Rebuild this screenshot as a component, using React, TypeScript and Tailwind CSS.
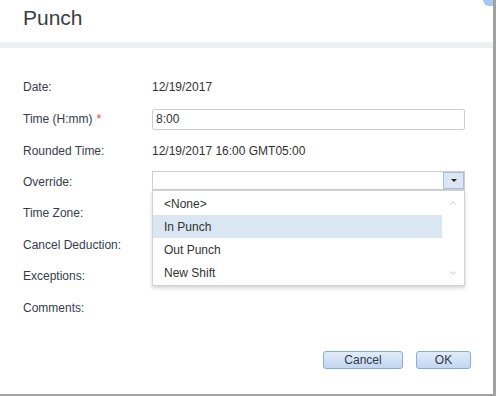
import { ChevronDown, ChevronUp } from 'lucide-react';

// 폼 행: 라벨 + 값 (행 높이로 세로 위치를 맞춘다)
const ROWS: { label: string; h: string; kind?: 'date' | 'time' | 'rounded' | 'override' }[] = [
  { label: 'Date:', h: 'h-[32px]', kind: 'date' },
  { label: 'Time (H:mm)', h: 'h-[32px]', kind: 'time' },
  { label: 'Rounded Time:', h: 'h-[32px]', kind: 'rounded' },
  { label: 'Override:', h: 'h-[30px]', kind: 'override' },
  { label: 'Time Zone:', h: 'h-[32px]' },
  { label: 'Cancel Deduction:', h: 'h-[31px]' },
  { label: 'Exceptions:', h: 'h-[32px]' },
  { label: 'Comments:', h: 'h-[31px]' },
];

const OPTIONS = ['<None>', 'In Punch', 'Out Punch', 'New Shift'];

export default function App() {
  return (
    <div className="relative h-[396px] w-[496px] overflow-hidden bg-white font-['Liberation_Sans',Arial,sans-serif] text-[12px] text-[#333]">
      <div className="flex h-full w-full flex-col border-r-[3px] border-b-[2px] border-[#a2a2a2]">
        {/* 제목 */}
        <div className="h-[42px] pt-[6px] pl-[23px]">
          <h1 className="text-[21px] leading-[24px] text-[#3a3d44]">Punch</h1>
        </div>
        <div className="h-[6px] bg-[#eef0f2]" />

        {/* 폼 */}
        <div className="flex flex-col pt-[23px] pl-[23px]">
          {ROWS.map((r) => (
            <div key={r.label} className={`flex items-center ${r.h}`}>
              <div className="w-[129px] text-[#363d4c]">
                {r.label}
                {r.kind === 'time' && <span className="ml-[4px] text-[#e0463c]">*</span>}
              </div>
              <RowValue kind={r.kind} />
            </div>
          ))}
        </div>

        {/* 버튼 */}
        <div className="mt-[28px] flex justify-end gap-[13px] pr-[22px]">
          <DialogButton label="Cancel" w="w-[80px]" />
          <DialogButton label="OK" w="w-[55px]" />
        </div>
      </div>

      {/* 상단 오른쪽 모서리 */}
      <div className="absolute top-0 right-[3px] h-[6px] w-[10px] rounded-bl-full bg-[#a8c8ec]" />

      {/* 드롭다운 목록 */}
      <div className="absolute top-[190px] left-[152px] flex h-[96px] w-[313px] border border-[#d2d2d2] bg-white shadow-[0_2px_4px_rgba(0,0,0,0.18)]">
        <div className="flex-1 pt-[1px]">
          {OPTIONS.map((o) => (
            <div
              key={o}
              className={`flex h-[23px] items-center pl-[11px] ${o === 'In Punch' ? 'bg-[#dae6f2]' : ''}`}
            >
              {o}
            </div>
          ))}
        </div>
        <div className="flex w-[22px] flex-col items-center justify-between py-[7px] text-[#a8a8a8]">
          <ChevronUp size={10} strokeWidth={1.6} />
          <ChevronDown size={10} strokeWidth={1.6} />
        </div>
      </div>
    </div>
  );
}

function RowValue({ kind }: { kind?: string }) {
  if (kind === 'date') return <div>12/19/2017</div>;
  if (kind === 'rounded') return <div>12/19/2017 16:00 GMT05:00</div>;
  if (kind === 'time')
    return (
      <div className="flex h-[21px] w-[313px] items-center rounded-[2px] border border-[#cfcfcf] pl-[3px]">
        8:00
      </div>
    );
  if (kind === 'override')
    return (
      <div className="-mt-[3px] flex h-[19px] w-[313px] border border-[#cfcfcf]">
        <div className="flex-1" />
        <div className="flex w-[21px] items-center justify-center border border-[#a6c0de] bg-[#dbe6f2]">
          <div className="h-0 w-0 border-x-[3px] border-t-[3px] border-x-transparent border-t-[#222]" />
        </div>
      </div>
    );
  return null;
}

function DialogButton({ label, w }: { label: string; w: string }) {
  return (
    <button
      className={`flex h-[18px] ${w} items-center justify-center rounded-[3px] border border-[#86acd8] bg-gradient-to-b from-[#e2ecf8] to-[#c2d6ef] text-[12px] text-[#2d3a4c]`}
    >
      {label}
    </button>
  );
}
